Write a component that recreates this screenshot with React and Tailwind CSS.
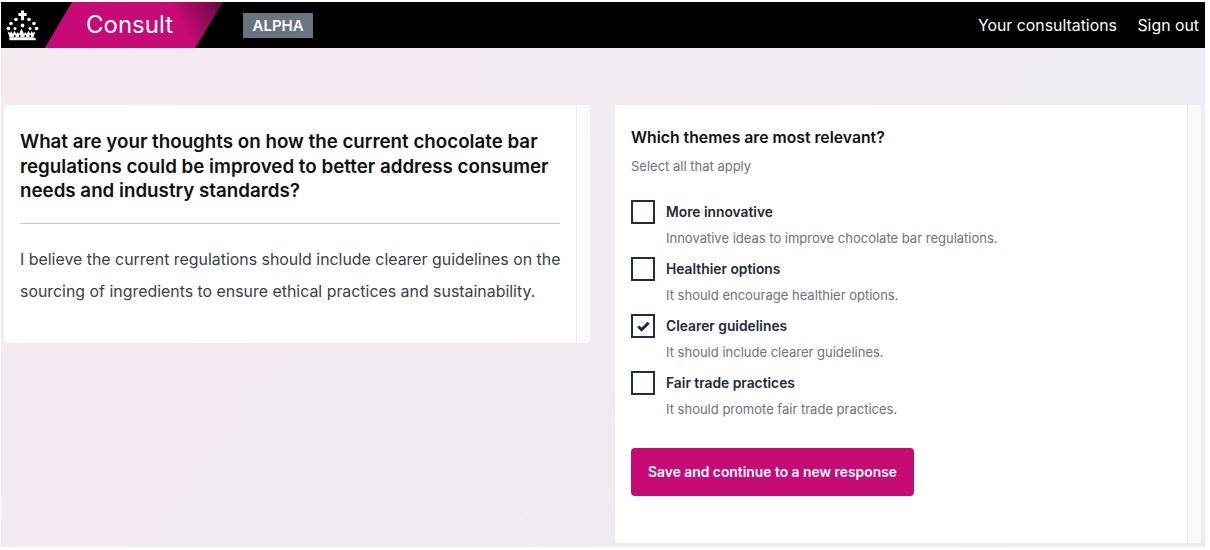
import React from 'react';

const themes = [
  { title: 'More innovative', text: 'Innovative ideas to improve chocolate bar regulations.', checked: false },
  { title: 'Healthier options', text: 'It should encourage healthier options.', checked: false },
  { title: 'Clearer guidelines', text: 'It should include clearer guidelines.', checked: true },
  { title: 'Fair trade practices', text: 'It should promote fair trade practices.', checked: false },
];

const Crown = () => (
  <svg width="34" height="31" viewBox="0 0 34 31" fill="white">
    <path d="M15 0.5h3v2.6h2.6v2.8H18v4.4h-3V5.9h-2.6V3.1H15z" />
    <circle cx="10" cy="9.5" r="1.8" />
    <circle cx="23" cy="9.5" r="1.8" />
    <circle cx="5" cy="13.5" r="1.8" />
    <circle cx="28" cy="13.5" r="1.8" />
    <circle cx="2.4" cy="18.5" r="1.8" />
    <circle cx="30.6" cy="18.5" r="1.8" />
    <circle cx="16.5" cy="15.5" r="1.9" />
    <circle cx="9" cy="18.5" r="1.5" />
    <circle cx="24" cy="18.5" r="1.5" />
    <path d="M1.6 21.5l2.6 1.6 1-2 1.6 2.8 1.7-3.2 1.7 3.2 1.5-2 1.3 2 2.2-4.6h.6l2.2 4.6 1.3-2 1.5 2 1.7-3.2 1.7 3.2 1.6-2.8 1 2 2.6-1.6-2 6.2H3.6z" />
    <rect x="3.4" y="27.8" width="26.2" height="2.4" />
    <path d="M8 25h1.4v2H8zM13 25h1.4v2H13zM18.6 25H20v2h-1.400zM23.600 25H25v2h-1.400z" fill="black" />
  </svg>
);

const Tick = () => (
  <svg width="13" height="11" viewBox="0 0 13 11" fill="none" stroke="#1f2937" strokeWidth="3">
    <path d="M1.2 5.500l3.400 3.200 7-7" />
  </svg>
);

const ThemeOption = ({ title, text, checked }) => (
  <div className="flex h-[57px]">
    <div className="flex h-6 w-6 shrink-0 items-center justify-center border-2 border-[#1f2d45] bg-white">
      {checked && <Tick />}
    </div>
    <div className="ml-[11px]">
      <div className="text-[13.8px] leading-6 font-semibold text-[#1f2937]">{title}</div>
      <div className="mt-[5px] text-[13px] leading-[18px] text-[#6b7280]">{text}</div>
    </div>
  </div>
);

export default function App() {
  return (
    <div className="h-[550px] w-[1210px] overflow-hidden bg-white pl-[1px] pt-[2px] font-['Inter',sans-serif]">
      <div className="h-[545px] w-[1204px] bg-[linear-gradient(125deg,#f6eaf1_0%,#ecebf2_100%)]">
        <header className="flex h-[46px] items-center justify-between bg-black text-white">
          <div className="flex h-full items-center">
            <div className="ml-[5px] w-[34px]">
              <Crown />
            </div>
            <div className="ml-[5px] flex h-full w-[178px] items-center bg-[linear-gradient(60deg,#c60a76_74%,#6b0a45_97%)] pl-[41px] [clip-path:polygon(27px_0,100%_0,150px_100%,0_100%)]">
              <span className="text-[24px] leading-none">Consult</span>
            </div>
            <span className="ml-[20px] bg-[#6b7280] px-[9.5px] py-[3px] text-[15px] leading-[19px] font-semibold">ALPHA</span>
          </div>
          <nav className="mr-[6px] flex gap-[20.5px] pt-px text-[15.85px]">
            <a>Your consultations</a>
            <a>Sign out</a>
          </nav>
        </header>

        <main className="flex items-start pl-[3px] pt-[57px]">
          <section className="flex h-[238px] w-[586px] overflow-hidden rounded bg-white">
            <div className="w-[572px] px-4 pt-[25px]">
              <h1 className="text-[18.75px] leading-[24.7px] font-semibold text-[#111]">
                What are your thoughts on how the current chocolate bar regulations could be improved to better address consumer needs and industry standards?
              </h1>
              <hr className="mt-[19px] border-[#c8c9cc]" />
              <p className="-mr-[6px] mt-[20px] text-[15.9px] leading-[32px] text-[#374151]">
                I believe the current regulations should include clearer guidelines on the sourcing of ingredients to ensure ethical practices and sustainability.
              </p>
            </div>
            <div className="flex-1 border-l border-[#eeeeee] bg-[#fafafa]" />
          </section>

          <section className="ml-[25px] flex h-[438px] w-[586px] overflow-hidden rounded bg-white">
            <div className="w-[572px] pl-4 pt-[23px]">
              <h2 className="text-[15.75px] leading-5 font-semibold text-[#111]">Which themes are most relevant?</h2>
              <p className="mt-[9px] text-[13px] leading-[18px] text-[#6b7280]">Select all that apply</p>
              <div className="mt-[25px]">
                {themes.map((theme) => (
                  <ThemeOption key={theme.title} {...theme} />
                ))}
              </div>
              <button className="mt-[20px] h-[48px] w-[283px] rounded bg-[#c60a76] text-[13.85px] font-semibold text-white">
                Save and continue to a new response
              </button>
            </div>
            <div className="flex-1 border-l border-[#e8e8e8] bg-[#fafafa]" />
          </section>
        </main>
      </div>
    </div>
  );
}
